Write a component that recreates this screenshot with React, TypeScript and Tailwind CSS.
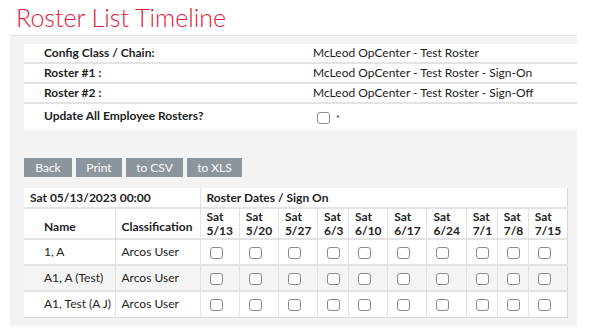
import React from 'react';

const infoRows = [
  { label: 'Config Class / Chain:', value: 'McLeod OpCenter - Test Roster' },
  { label: 'Roster #1 :', value: 'McLeod OpCenter - Test Roster - Sign-On' },
  { label: 'Roster #2 :', value: 'McLeod OpCenter - Test Roster - Sign-Off' },
];

const dates = ['5/13', '5/20', '5/27', '6/3', '6/10', '6/17', '6/24', '7/1', '7/8', '7/15'];

const people = [
  { name: '1, A', cls: 'Arcos User' },
  { name: 'A1, A (Test)', cls: 'Arcos User' },
  { name: 'A1, Test (A J)', cls: 'Arcos User' },
];

function Box() {
  return <span className="inline-block w-[13px] h-[12px] border border-[#8a8a8a] rounded-[3px] bg-white align-middle" />;
}

export default function App() {
  return (
    <div className="w-[590px] h-[334px] bg-white overflow-hidden font-['Lato','Liberation_Sans',sans-serif] text-[#222]">
      <h1 className="pl-[16px] pt-[3px] h-[35px] text-[25px] leading-[29px] font-light text-[#e3173b]">
        Roster List Timeline
      </h1>

      <div className="ml-[10px] w-[567px] bg-[#f3f3f3] border-t border-[#e2e2e2] pt-[8px] pl-[14px] pb-[8px]">
        {/* header info */}
        <div className="bg-white text-[12px]">
          {infoRows.map(r => (
            <div key={r.label} className="flex h-[20px] items-center border-b-2 border-[#e3e3e3]">
              <div className="w-[289px] pl-[20px] font-bold">{r.label}</div>
              <div>{r.value}</div>
            </div>
          ))}
          <div className="flex h-[26px] items-start pt-[3px]">
            <div className="w-[289px] pl-[20px] font-bold">Update All Employee Rosters?</div>
            <div className="pl-[4px] pt-[5px] flex items-center gap-[6px]">
              <Box />
              <span className="text-[9px] leading-none">*</span>
            </div>
          </div>
        </div>

        {/* actions */}
        <div className="flex gap-[4px] mt-[28px] text-[12px] text-white">
          <button className="w-[48px] h-[19px] bg-[#8c949c]">Back</button>
          <button className="w-[46px] h-[19px] bg-[#8c949c]">Print</button>
          <button className="w-[57px] h-[19px] bg-[#8c949c]">to CSV</button>
          <button className="w-[55px] h-[19px] bg-[#8c949c]">to XLS</button>
        </div>

        {/* timeline */}
        <table className="mt-[11px] w-[544px] bg-white border-collapse text-[12px] border-b border-r border-[#d8d8d8]">
          <thead>
            <tr className="h-[20px] border-b-2 border-[#e3e3e3]">
              <th colSpan={2} className="text-left font-bold pl-[6px] border-r border-[#e3e3e3]">Sat 05/13/2023 00:00</th>
              <th colSpan={10} className="text-left font-bold pl-[6px]">Roster Dates / Sign On</th>
            </tr>
            <tr className="h-[31px] border-b-2 border-[#e3e3e3]">
              <th className="w-[91px] font-bold text-left pl-[20px] pt-[6px] border-r border-[#e3e3e3]">Name</th>
              <th className="w-[85px] font-bold text-left pl-[6px] pt-[6px] border-r border-[#e3e3e3]">Classification</th>
              {dates.map(d => (
                <th key={d} className="font-bold text-left pl-[6px] border-r border-[#e3e3e3] last:border-r-0">
                  <span className="block leading-[14px]">Sat</span>
                  <span className="block leading-[14px]">{d}</span>
                </th>
              ))}
            </tr>
          </thead>
          <tbody>
            {people.map((p, i) => (
              <tr key={p.name} className={`h-[26px] border-b-2 border-[#e3e3e3] last:border-b-0 ${i === 1 ? 'bg-[#f4f4f4]' : ''}`}>
                <td className="pl-[20px] border-r border-[#e3e3e3]">{p.name}</td>
                <td className="pl-[6px] border-r border-[#e3e3e3]">{p.cls}</td>
                {dates.map(d => (
                  <td key={d} className="pl-[9px] border-r border-[#e3e3e3] last:border-r-0">
                    <Box />
                  </td>
                ))}
              </tr>
            ))}
          </tbody>
        </table>
      </div>
    </div>
  );
}
